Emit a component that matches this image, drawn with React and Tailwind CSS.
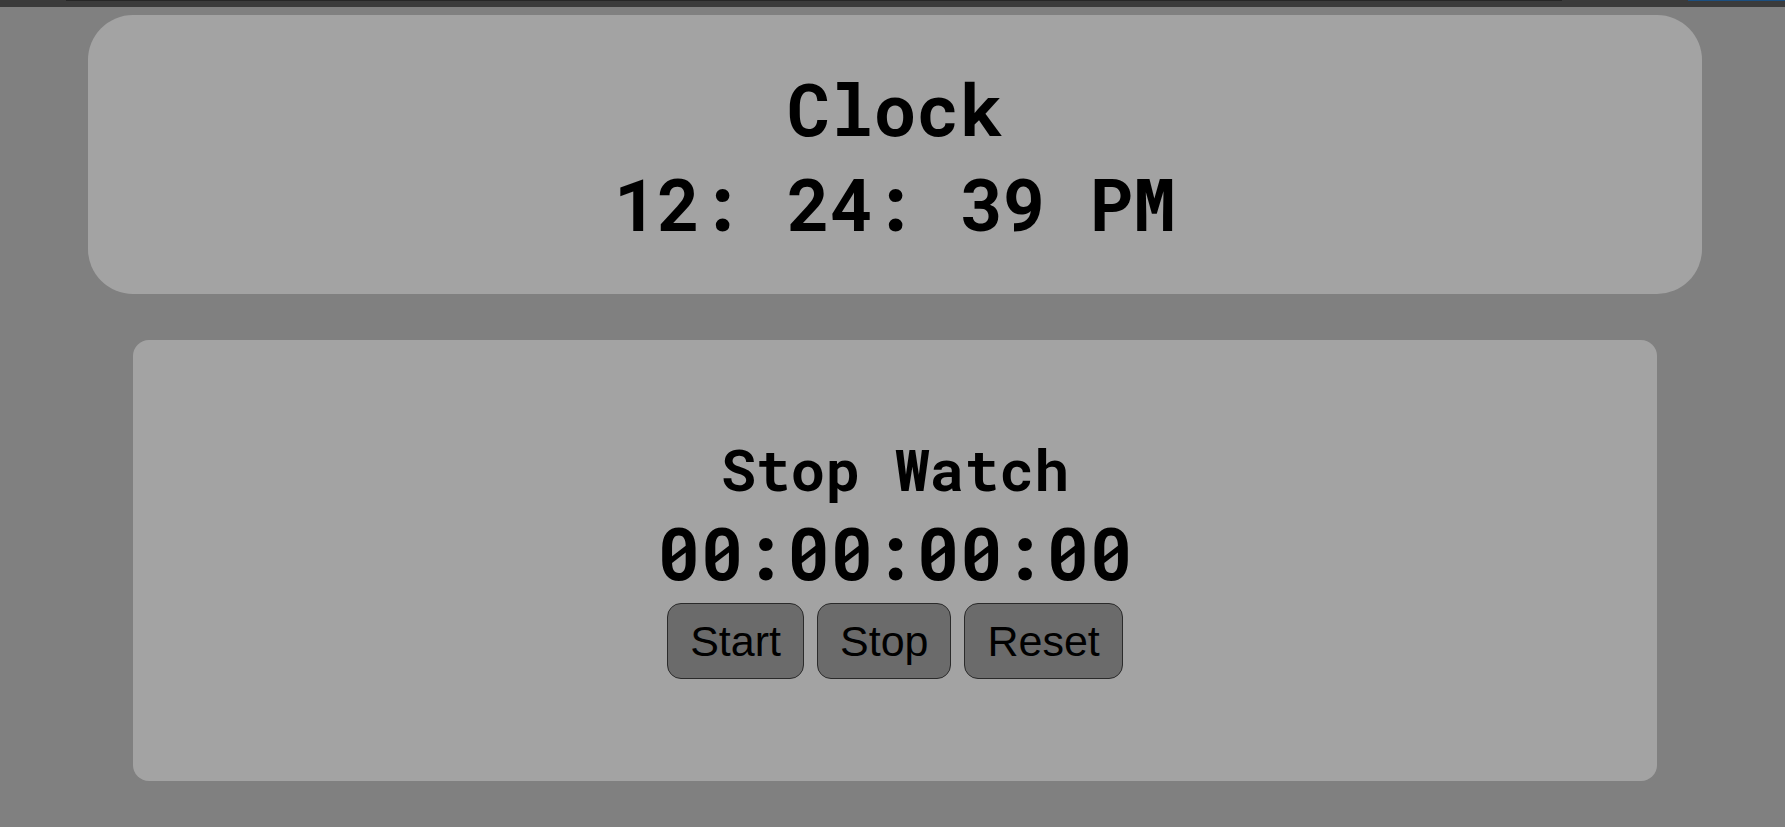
import React from "react";

const mono = { fontFamily: '"Roboto Mono", "DejaVu Sans Mono", monospace' };

export default function App() {
  return (
    <div className="min-h-[827px] w-full bg-[#808080]">
      <div className="h-[7px] w-full bg-[#3b3b3b]">
        <div className="flex h-[1px] w-full">
          <div className="w-[66px]" />
          <div className="w-[1496px] bg-[#262626]" />
          <div className="flex-1" />
          <div className="w-[97px] bg-[#1c4f80]" />
        </div>
      </div>
      <div className="pl-[88px] pr-[83px] pt-[8px]">
        <div
          className="flex h-[279px] flex-col items-center justify-center rounded-[45px] bg-[#a3a3a3] pt-[2px] font-bold text-black"
          style={mono}
        >
          <div className="text-[72px] leading-[95px]">Clock</div>
          <div className="text-[72px] leading-[95px] whitespace-pre">12: 24: 39 PM</div>
        </div>
        <div className="mx-[45px] mt-[46px] flex h-[441px] flex-col items-center justify-center rounded-[16px] bg-[#a3a3a3] pb-[8px] text-black">
          <div className="text-[58px] font-bold leading-[68px] whitespace-pre" style={mono}>
            Stop Watch
          </div>
          <div className="mt-[10px] text-[72px] font-bold leading-[80px]" style={mono}>
            00:00:00:00
          </div>
          <div className="mt-[10px] flex gap-[13px] font-['Liberation_Sans',Arial,sans-serif]">
            <button className="h-[76px] rounded-[14px] border border-[#2a2a2a] bg-[#6b6b6b] px-[22px] text-[43px] leading-[48px] text-black">
              Start
            </button>
            <button className="h-[76px] rounded-[14px] border border-[#2a2a2a] bg-[#6b6b6b] px-[22px] text-[43px] leading-[48px] text-black">
              Stop
            </button>
            <button className="h-[76px] rounded-[14px] border border-[#2a2a2a] bg-[#6b6b6b] px-[22px] text-[43px] leading-[48px] text-black">
              Reset
            </button>
          </div>
        </div>
      </div>
    </div>
  );
}
